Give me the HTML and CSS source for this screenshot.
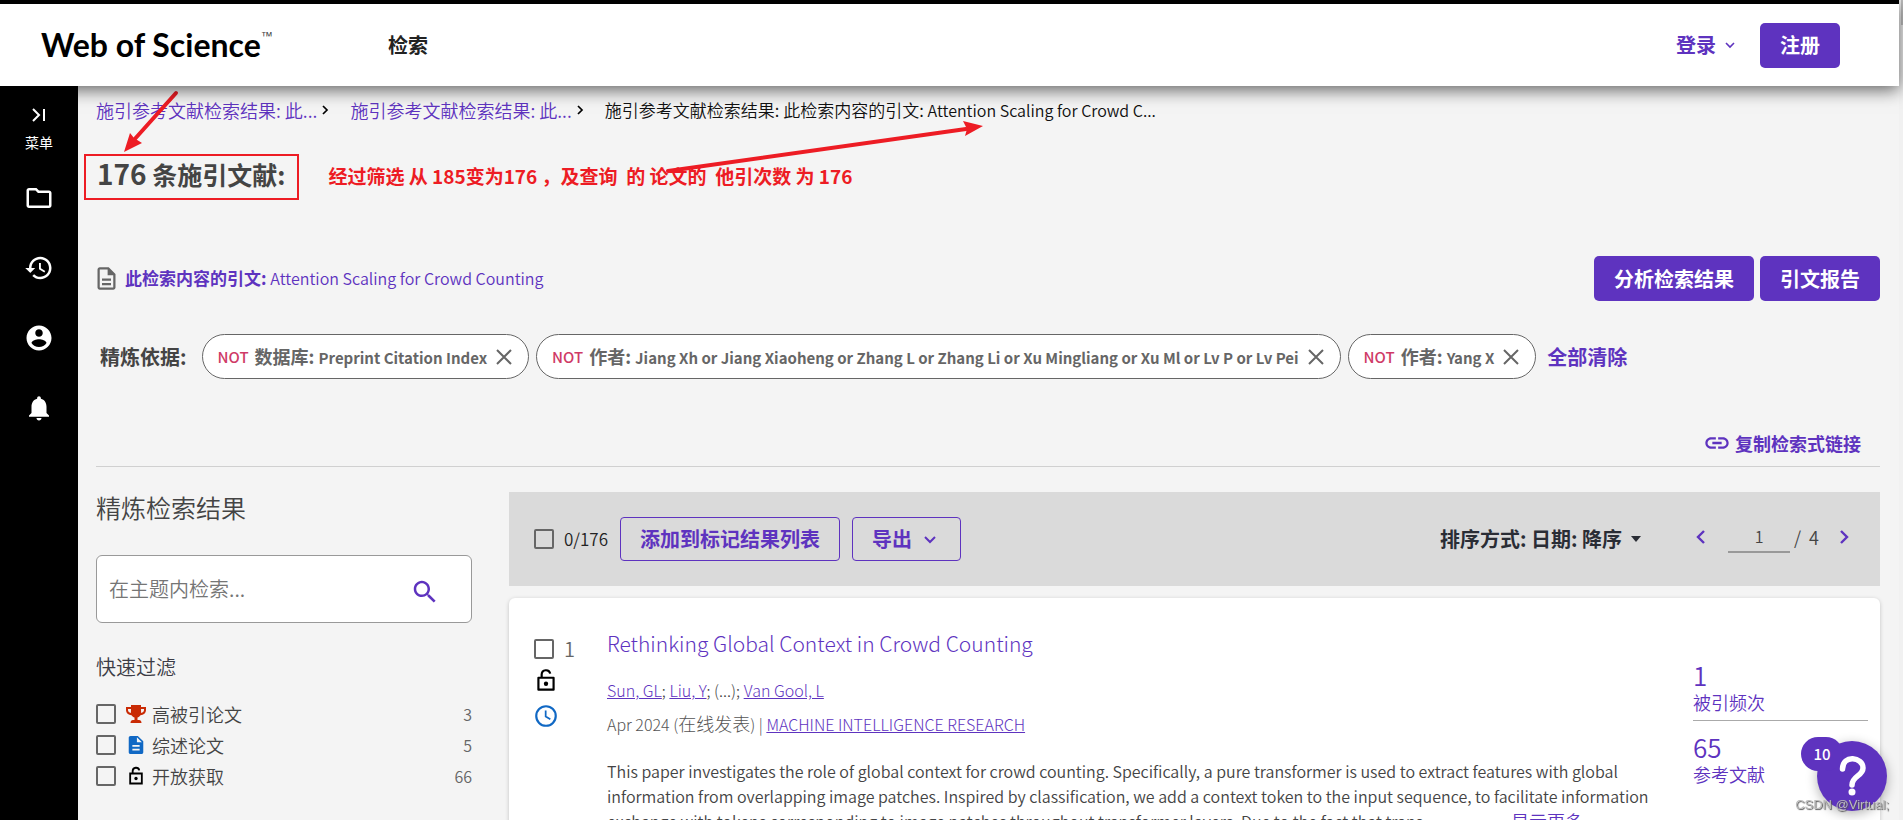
FILE: index.html
```html
<!DOCTYPE html>
<html lang="zh-CN">
<head>
<meta charset="utf-8">
<title>Web of Science</title>
<link rel="stylesheet" href="styles.css">
</head>
<body>
<div class="window">
<div class="app">
  <header class="topbar">
    <a class="logo" href="#">Web of Science<sup>™</sup></a>
    <nav class="topnav"><a href="#">检索</a></nav>
    <button class="signin" type="button">登录
      <svg width="12" height="12" viewBox="0 0 12 12"><path d="M2 4l4 4 4-4" fill="none" stroke="currentColor" stroke-width="1.6"/></svg>
    </button>
    <button class="btn" type="button">注册</button>
  </header>
  <div class="body">
    <nav class="rail">
      <button class="rail-menu" type="button">
        <svg width="18" height="14" viewBox="0 0 18 14"><path d="M3 1l6 6-6 6M14 1v12" fill="none" stroke="currentColor" stroke-width="2"/></svg>
        <span>菜单</span>
      </button>
      <a href="#" aria-label="文件夹"><svg class="i30" viewBox="0 0 24 24"><path d="M9.17 6l2 2H20v10H4V6h5.17M10 4H4c-1.1 0-1.99.9-1.99 2L2 18c0 1.100.9 2 2 2h16c1.100 0 2-.9 2-2V8c0-1.100-.9-2-2-2h-8l-2-2z"/></svg></a>
      <a href="#" aria-label="历史"><svg class="i30" viewBox="0 0 24 24"><path d="M13 3c-4.970 0-9 4.030-9 9H1l3.890 3.890.07.14L9 12H6c0-3.870 3.130-7 7-7s7 3.130 7 7-3.130 7-7 7c-1.930 0-3.680-.79-4.940-2.060l-1.420 1.420C8.270 19.990 10.510 21 13 21c4.970 0 9-4.030 9-9s-4.030-9-9-9zm-1 5v5l4.280 2.540.72-1.210-3.500-2.080V8H12z"/></svg></a>
      <a href="#" aria-label="账户"><svg class="i30" viewBox="0 0 24 24"><path d="M12 2C6.480 2 2 6.480 2 12s4.480 10 10 10 10-4.480 10-10S17.520 2 12 2zm0 3c1.660 0 3 1.340 3 3s-1.340 3-3 3-3-1.340-3-3 1.340-3 3-3zm0 14.200c-2.500 0-4.710-1.280-6-3.220.03-1.990 4-3.080 6-3.080 1.990 0 5.970 1.090 6 3.080-1.290 1.940-3.500 3.220-6 3.220z"/></svg></a>
      <a href="#" aria-label="通知"><svg class="i30" viewBox="0 0 24 24"><path d="M12 22c1.100 0 2-.9 2-2h-4c0 1.100.89 2 2 2zm6-6v-5c0-3.070-1.640-5.640-4.500-6.320V4c0-.83-.67-1.500-1.500-1.500s-1.500.67-1.500 1.500v.68C7.630 5.360 6 7.920 6 11v5l-2 2v1h16v-1l-2-2z"/></svg></a>
    </nav>
    <main class="main">
      <nav class="crumbs">
        <a href="#">施引参考文献检索结果: 此...</a><svg width="7" height="10" viewBox="0 0 7 10"><path d="M1 1l4 4-4 4" fill="none" stroke="#000" stroke-width="1.7"/></svg>
        <a href="#">施引参考文献检索结果: 此...</a><svg width="7" height="10" viewBox="0 0 7 10"><path d="M1 1l4 4-4 4" fill="none" stroke="#000" stroke-width="1.7"/></svg>
        <span class="current">施引参考文献检索结果: 此检索内容的引文: <span class="latin">Attention Scaling for Crowd C...</span></span>
      </nav>
      <div class="title-row">
        <h1><span class="count">176</span> 条施引文献:</h1>
        <p class="note">经过筛选 从 185变为176 ，及查询  的 论文的  他引次数 为 176</p>
      </div>
      <svg class="arrows" width="920" height="110" viewBox="80 80 920 110"><g fill="#ed1c24" stroke="#ed1c24"><path d="M176 93L133 141" stroke-width="4" stroke-linecap="round"/><path d="M124 152L130 133 134 138 142 143z" stroke="none"/><path d="M668 171L966 129" stroke-width="4" stroke-linecap="round"/><path d="M983 126L963 121 967 129 965 136z" stroke="none"/></g></svg>

      <div class="cite-row">
        <svg class="i27" viewBox="0 0 24 24" fill="#666"><path d="M8 16h8v2H8zm0-4h8v2H8zm6-10H6c-1.100 0-2 .9-2 2v16c0 1.100.89 2 1.990 2H18c1.100 0 2-.9 2-2V8l-6-6zm4 18H6V4h7v5h5v11z"/></svg>
        <a class="cite" href="#"><b>此检索内容的引文:</b> <span class="latin">Attention Scaling for Crowd Counting</span></a>
        <button class="btn" type="button">分析检索结果</button>
        <button class="btn" type="button">引文报告</button>
      </div>

      <div class="refine-row">
        <span class="refine-label">精炼依据:</span>
        <button class="chip" type="button"><i>NOT</i><b>数据库: <span>Preprint Citation Index</span></b><svg width="16" height="16" viewBox="0 0 16 16"><path d="M1 1l14 14M15 1L1 15" stroke="currentColor" stroke-width="2"/></svg></button>
        <button class="chip" type="button"><i>NOT</i><b>作者: <span>Jiang Xh or Jiang Xiaoheng or Zhang L or Zhang Li or Xu Mingliang or Xu Ml or Lv P or Lv Pei</span></b><svg width="16" height="16" viewBox="0 0 16 16"><path d="M1 1l14 14M15 1L1 15" stroke="currentColor" stroke-width="2"/></svg></button>
        <button class="chip" type="button"><i>NOT</i><b>作者: <span>Yang X</span></b><svg width="16" height="16" viewBox="0 0 16 16"><path d="M1 1l14 14M15 1L1 15" stroke="currentColor" stroke-width="2"/></svg></button>
        <a class="clear" href="#">全部清除</a>
      </div>

      <div class="link-row">
        <a href="#"><svg width="28" height="28" viewBox="0 0 24 24" fill="currentColor"><path d="M3.900 12c0-1.710 1.390-3.100 3.100-3.100h4V7H7c-2.760 0-5 2.240-5 5s2.240 5 5 5h4v-1.900H7c-1.710 0-3.100-1.390-3.100-3.100zM8 13h8v-2H8v2zm9-6h-4v1.900h4c1.710 0 3.100 1.390 3.100 3.100s-1.390 3.100-3.100 3.100h-4V17h4c2.760 0 5-2.240 5-5s-2.240-5-5-5z"/></svg>复制检索式链接</a>
      </div>

      <div class="columns">
        <aside class="filters">
          <h2>精炼检索结果</h2>
          <form class="search">
            <input type="text" aria-label="在主题内检索" placeholder="在主题内检索...">
            <button type="button" aria-label="检索"><svg class="i30" viewBox="0 0 24 24"><path d="M15.500 14h-.79l-.28-.27C15.410 12.590 16 11.110 16 9.500 16 5.910 13.090 3 9.500 3S3 5.910 3 9.500 5.910 16 9.500 16c1.610 0 3.090-.59 4.230-1.570l.27.28v.79l5 4.990L20.490 19l-4.990-5zm-6 0C7.010 14 5 11.990 5 9.500S7.010 5 9.500 5 14 7.010 14 9.500 11.990 14 9.500 14z"/></svg></button>
          </form>
          <h3>快速过滤</h3>
          <label class="filter"><input type="checkbox"><svg width="20" height="18" viewBox="0 0 20 18"><path fill="#c92b05" fill-rule="evenodd" d="M5 0h10v2h5v3c0 3-2.500 5-5.500 5.200C13.700 11.300 12.500 12.200 11.500 12.500V15H13c1.500 0 2.500 1 2.500 3h-11c0-2 1-3 2.500-3h1.500v-2.500C7.500 12.200 6.300 11.300 5.500 10.200 2.500 10 0 8 0 5V2h5zM5 4H2v1c0 1.500 1.200 2.600 2.900 3zM15 4l.1 4C16.800 7.600 18 6.500 18 5V4z"/></svg><span>高被引论文</span><em>3</em></label>
          <label class="filter"><input type="checkbox"><svg width="20" height="20" viewBox="1 1 22 22"><path fill="#1068c4" d="M14 2H6c-1.100 0-1.990.9-1.990 2L4 20c0 1.100.89 2 1.990 2H18c1.100 0 2-.9 2-2V8l-6-6zm2 16H8v-2h8v2zm0-4H8v-2h8v2zm-3-5V3.500L18.500 9H13z"/></svg><span>综述论文</span><em>5</em></label>
          <label class="filter"><input type="checkbox"><svg width="20" height="20" viewBox="0 0 24 24"><path fill="none" stroke="#000" stroke-width="2.200" d="M5 9h14v12H5zM8 9V6a4 4 0 0 1 7.900-.8"/><circle cx="12" cy="15" r="2"/></svg><span>开放获取</span><em>66</em></label>
        </aside>

        <section class="results">
          <div class="toolbar">
            <label class="pick"><input type="checkbox"><span>0/176</span></label>
            <button class="outline" type="button">添加到标记结果列表</button>
            <button class="outline" type="button">导出
              <svg width="14" height="14" viewBox="0 0 14 14"><path d="M2 5l5 5 5-5" fill="none" stroke="currentColor" stroke-width="2"/></svg>
            </button>
            <span class="sort"><select aria-label="排序方式"><option>排序方式: 日期: 降序</option></select><svg width="10" height="6" viewBox="0 0 10 6"><path d="M0 0h10L5 6z" fill="#2a2d35"/></svg></span>
            <div class="pager">
              <button type="button" aria-label="上一页"><svg width="10" height="16" viewBox="0 0 10 16"><path d="M8 2L2 8l6 6" fill="none" stroke="currentColor" stroke-width="2.400"/></svg></button>
              <input type="text" value="1" aria-label="页码"><span>/&nbsp; 4</span>
              <button type="button" aria-label="下一页"><svg width="10" height="16" viewBox="0 0 10 16"><path d="M2 2l6 6-6 6" fill="none" stroke="currentColor" stroke-width="2.400"/></svg></button>
            </div>
          </div>

          <article class="card">
            <div class="marks">
              <label class="pick"><input type="checkbox"><span>1</span></label>
              <svg width="26" height="26" viewBox="0 0 24 24"><path fill="none" stroke="#000" stroke-width="2" stroke-linejoin="round" d="M5 9h14v11H5zM8 9V6a4 4 0 0 1 7.900-.8"/><circle cx="12" cy="14.500" r="2"/></svg>
              <svg width="26" height="26" viewBox="0 0 24 24" fill="none" stroke="#1068c4"><circle cx="12" cy="12" r="9" stroke-width="2"/><path d="M11.700 7v5.500l4.300 2.500" stroke-width="1.600"/></svg>
            </div>
            <div class="record">
              <a class="rec-title" href="#">Rethinking Global Context in Crowd Counting</a>
              <p class="authors"><a href="#">Sun, GL</a>; <a href="#">Liu, Y</a>; (...); <a href="#">Van Gool, L</a></p>
              <p class="source">Apr 2024 (<span class="cjk">在线发表</span>) | <a href="#">MACHINE INTELLIGENCE RESEARCH</a></p>
              <div class="abstract">
                <p>This paper investigates the role of global context for crowd counting. Specifically, a pure transformer is used to extract features with global<br>information from overlapping image patches. Inspired by classification, we add a context token to the input sequence, to facilitate information<br>exchange with tokens corresponding to image patches throughout transformer layers. Due to the fact that trans...</p>
                <a class="more" href="#">显示更多</a>
              </div>
            </div>
            <div class="stats">
              <a href="#"><b>1</b>被引频次</a>
              <a href="#"><b>65</b>参考文献</a>
            </div>
          </article>
        </section>
      </div>
    </main>
  </div>
</div>
<div class="scroll"><div class="thumb"></div></div>
</div>
<div class="help"><button type="button" aria-label="帮助"><svg width="70" height="70" viewBox="0 0 70 70"><path d="M25.500 28c0-15 20.500-12 20.500-1 0 8-11 8-11 17" fill="none" stroke="#fff" stroke-width="5.500" stroke-linecap="round"/><circle cx="35" cy="51" r="3.500" fill="#fff"/></svg></button><span class="badge">10</span></div>
<div class="mark">CSDN @Virtual;</div>
</body>
</html>
```
FILE: styles.css
```css
* { box-sizing: border-box; }
body {
  margin: 0;
  background: #f4f4f4;
  color: #444;
  font-family: "Noto Sans CJK SC", sans-serif;
  font-size: 18px;
  font-weight: 350;
  line-height: 24px;
}
h1, h2, h3, p { margin: 0; font-weight: 350; }
a { color: #5e33bf; text-decoration: none; }
button, input, select { font: inherit; color: inherit; margin: 0; padding: 0; border: 0; background: none; }
svg { flex: none; display: block; }
i, em { font-style: normal; }

.window { display: flex; height: 100vh; overflow: hidden; }
.app { flex: 1; min-width: 0; display: flex; flex-direction: column; }
.scroll { width: 4px; padding-left: 2px; background: #f1f1f1; }
.thumb { height: 25px; background: #c1c1c1; }

.topbar {
  position: relative;
  z-index: 1;
  flex: none;
  display: flex;
  align-items: center;
  height: 86px;
  padding: 0 59px 0 41px;
  border-top: 4px solid #000;
  background: #fff;
  box-shadow: 0 4px 16px rgba(0, 0, 0, .6);
}
.logo { display: flex; width: 347px; color: #000; font: 700 32px/40px Lato, sans-serif; }
.logo sup { font: 400 12px/16px "Liberation Sans", sans-serif; padding-top: 3px; color: #444; }
.topnav { flex: 1; font-size: 20px; font-weight: 700; }
.topnav a { color: #222; }
.signin { display: flex; align-items: center; gap: 8px; margin-right: 24px; color: #5e33bf; font-size: 20px; font-weight: 700; }
.btn { height: 45px; padding: 0 20px; border-radius: 5px; background: #5e33bf; color: #fff; font-size: 20px; font-weight: 700; }

.body { flex: 1; min-height: 0; display: flex; }
.rail { width: 78px; background: #000; color: #fff; display: flex; flex-direction: column; align-items: center; padding-top: 22px; }
.rail-menu { height: 50px; display: flex; flex-direction: column; align-items: center; gap: 8px; font-size: 14px; font-weight: 400; }
.rail a { margin-top: 40px; color: #fff; }
.rail .rail-menu + a { margin-top: 25px; }
.i30 { width: 30px; height: 30px; fill: currentColor; }
.i27 { width: 27px; height: 27px; }

.main { position: relative; flex: 1; min-width: 0; padding: 12px 19px 0 18px; overflow: hidden; }
.latin { font-size: 16px; }
.crumbs { display: flex; align-items: center; }
.crumbs svg { margin: 0 21px 0 5px; }
.current { color: #111; font-size: 17px; }
.title-row { display: flex; align-items: center; gap: 29px; margin: 32px 0 0 -12px; }
.title-row h1 { border: 2px solid #ed1c24; padding: 0 12px 6px 11px; font-size: 25px; line-height: 35px; font-weight: 700; }
.count { font-size: 28px; }
.note { padding-bottom: 2px; color: #ed1c24; font-size: 19px; font-weight: 700; white-space: pre; }
.arrows { position: absolute; left: 2px; top: -6px; }

.cite-row { display: flex; align-items: center; gap: 5px; margin: 56px 0 0 -3px; }
.cite { flex: 1; padding-bottom: 2px; font-size: 17px; }
.cite b { font-weight: 700; }
.cite-row .btn + .btn { margin-left: 1px; }
.refine-row { display: flex; align-items: center; gap: 7px; margin: 33px 0 0 4px; }
.refine-label { font-size: 20px; font-weight: 700; margin-right: 8px; }
.chip { display: flex; align-items: center; height: 45px; padding: 0 16px 0 15px; border: 1px solid #666; border-radius: 23px; background: #fff; color: #666; white-space: nowrap; }
.chip i { margin-right: 6px; color: #cf3a66; font-size: 15px; font-weight: 500; }
.chip b { font-size: 18px; font-weight: 700; }
.chip b span { font-size: 15px; }
.chip svg { margin-left: 9px; }
.clear { margin-left: 4px; font-size: 20px; font-weight: 700; }
.link-row { display: flex; justify-content: flex-end; margin-top: 50px; padding: 0 19px 9px 0; border-bottom: 1px solid #d0d0d0; font-weight: 700; }
.link-row a { display: flex; align-items: center; gap: 4px; height: 28px; }

.columns { display: flex; align-items: flex-start; gap: 37px; padding-top: 25px; }
.filters { flex: none; width: 376px; }
.filters h2 { font-size: 25px; line-height: 30px; }
.search { display: flex; align-items: center; height: 68px; margin-top: 33px; padding: 0 31px 0 12px; border: 1px solid #999; border-radius: 6px; background: #fff; }
.search input { flex: 1; min-width: 0; font-size: 20px; }
.search input::placeholder { color: #757575; }
.search button { color: #5e33bf; padding-top: 6px; }
.filters h3 { margin: 30px 0 17px; font-size: 20px; line-height: 28px; color: #3c3c46; }
.filter { display: flex; align-items: center; height: 31px; }
.filter svg { margin: 0 6px 0 10px; }
.filter em { margin-left: auto; color: #666; font-size: 16px; }
input[type=checkbox] { appearance: none; width: 20px; height: 20px; border: 2px solid #666; border-radius: 2px; }

.results { flex: 1; min-width: 0; }
.toolbar { display: flex; align-items: center; height: 94px; padding: 0 31px 0 25px; background: #dadada; }
.pick { display: flex; align-items: center; gap: 10px; }
.toolbar .pick { color: #222; font-size: 17px; margin-right: 12px; }
.outline { display: flex; align-items: center; gap: 12px; height: 44px; margin-right: 12px; padding: 0 19px; border: 1px solid #5e33bf; border-radius: 4px; color: #5e33bf; font-size: 20px; font-weight: 700; }
.outline + .outline { gap: 11px; padding-right: 23px; }
.sort { display: flex; align-items: center; gap: 8px; margin-left: auto; color: #2a2d35; font-size: 20px; font-weight: 700; }
.sort select { appearance: none; }
.pager { display: flex; align-items: center; margin-left: 55px; padding-bottom: 4px; color: #444; }
.pager button { color: #5e33bf; }
.pager input { width: 62px; height: 32px; margin: 0 4px 0 22px; border-bottom: 2px solid #999; text-align: center; font-size: 16px; }
.pager span { margin-right: 20px; }

.card { display: flex; height: 400px; margin-top: 12px; padding: 29px 12px 0 25px; border-radius: 6px; background: #fff; box-shadow: 0 1px 4px rgba(0, 0, 0, .2); }
.marks { flex: none; width: 73px; display: flex; flex-direction: column; gap: 9px; padding-top: 12px; }
.marks .pick { height: 20px; font-size: 20px; color: #666; }
.marks svg { margin-left: -1px; }
.record { flex: 1; min-width: 0; }
.rec-title { display: block; font-size: 21px; line-height: 32px; font-weight: 300; }
.authors { margin-top: 19px; font-size: 16px; font-weight: 300; }
.source { margin-top: 9px; font-size: 16px; font-weight: 300; color: #555; }
.source .cjk { font-size: 18px; }
.authors a, .source a { text-decoration: underline; }
.abstract { position: relative; margin-top: 23px; font-size: 16px; line-height: 25px; white-space: nowrap; }
.more { position: absolute; left: 904px; top: 50px; font-size: 18px; }
.stats { flex: none; width: 175px; padding-top: 32px; }
.stats a { display: block; padding-bottom: 6px; }
.stats a + a { border-top: 1px solid #aaa; padding-top: 10px; }
.stats b { display: block; font-size: 26px; line-height: 31px; font-weight: 350; }

.help { position: fixed; right: 16px; bottom: 9px; }
.help button { display: block; width: 70px; height: 70px; border-radius: 50%; background: #5e33bf; box-shadow: 0 3px 12px rgba(0, 0, 0, .3); }
.badge { position: absolute; left: -16px; top: -4px; width: 42px; height: 34px; border-radius: 17px; background: #5e33bf; color: #fff; font-size: 15px; line-height: 34px; font-weight: 500; text-align: center; }
.mark { position: fixed; right: 14px; bottom: 6px; color: #bbb; font: 13px/18px "Liberation Sans", sans-serif; text-shadow: 1px 1px 1px #555; }
```
